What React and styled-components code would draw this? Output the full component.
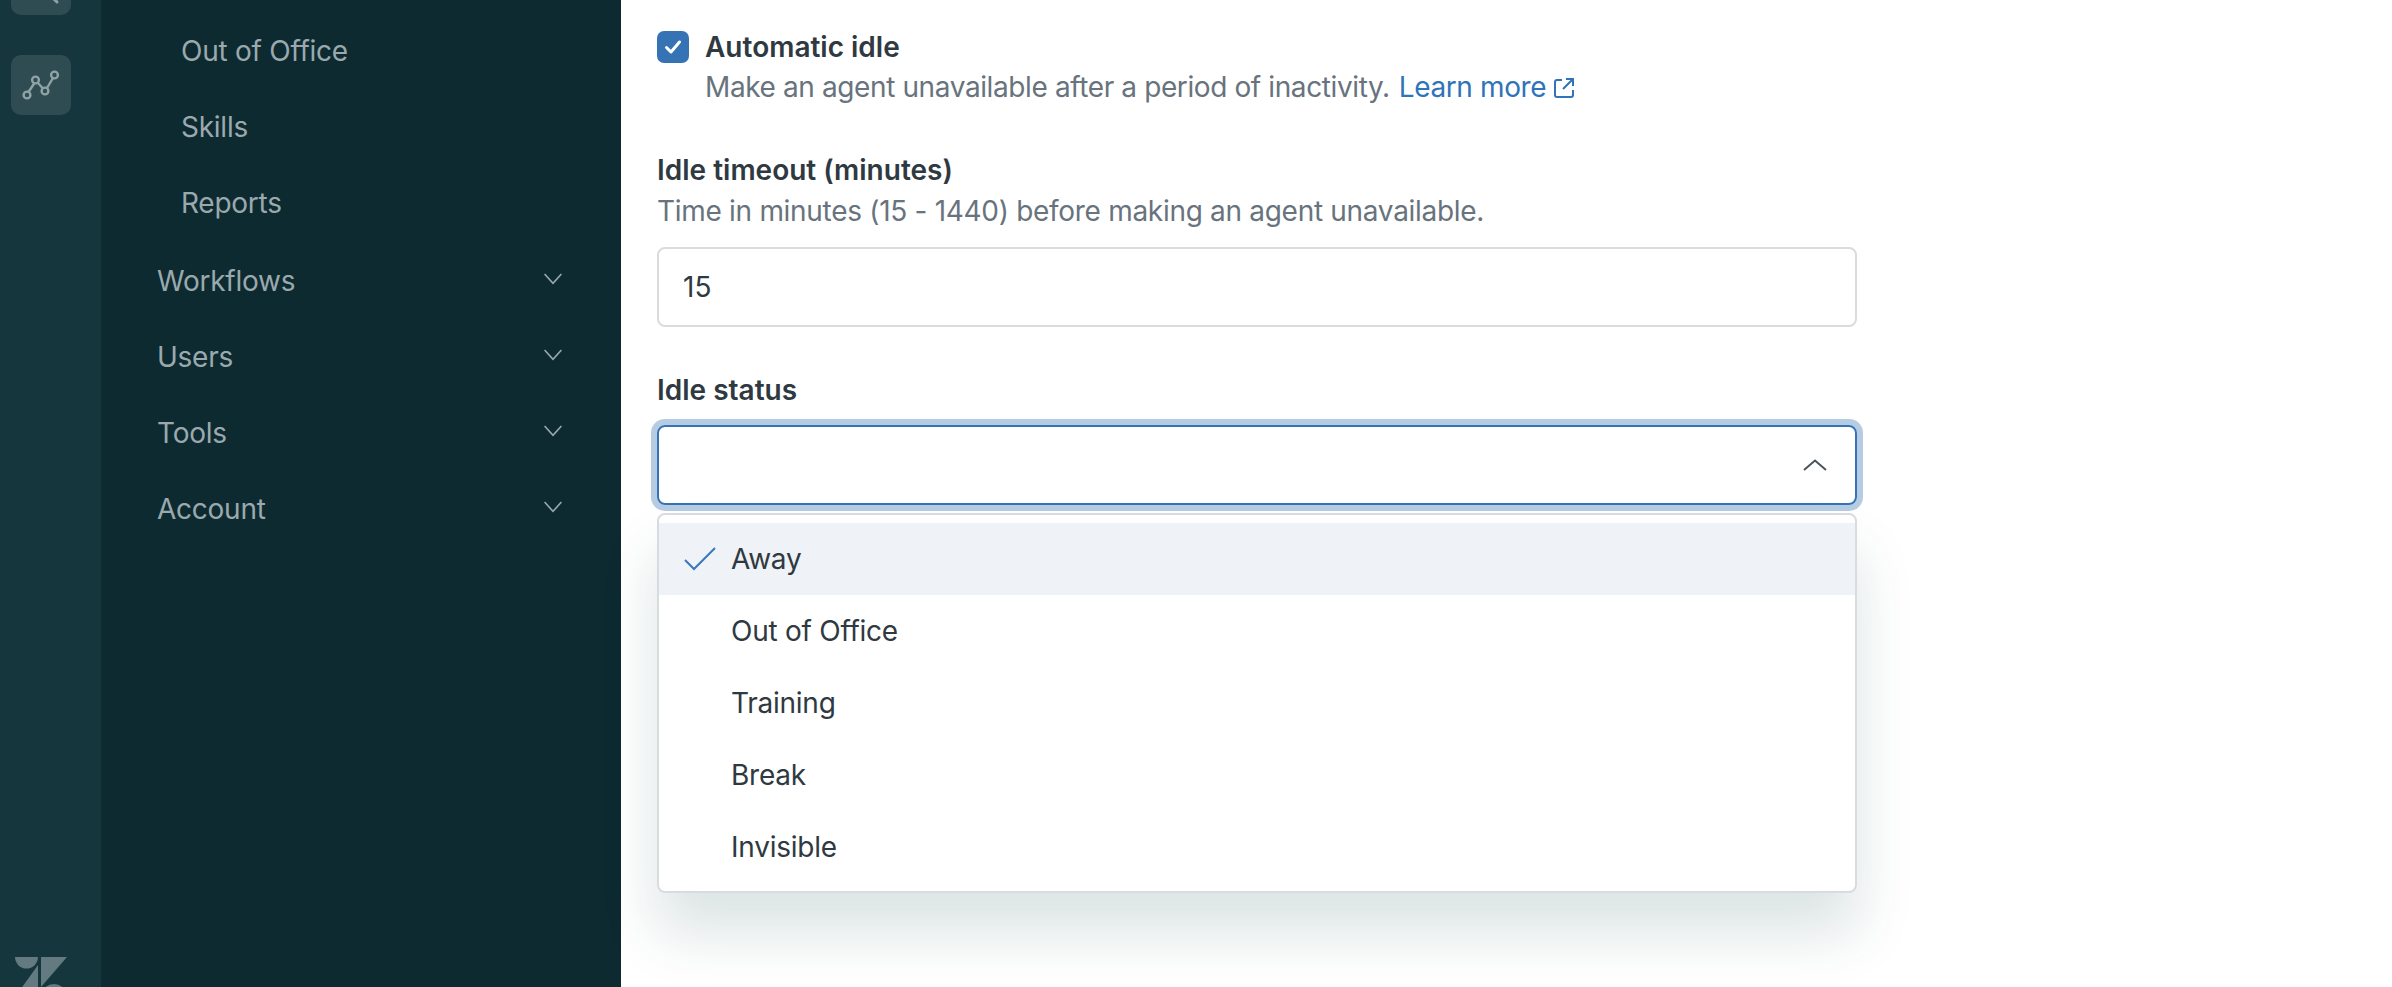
import styled, { createGlobalStyle } from "styled-components";

const GlobalStyle = createGlobalStyle`
  html, body {
    margin: 0;
    height: 100%;
    overflow: hidden;
    background: #fff;
    font-family: Inter, "Noto Sans", sans-serif;
  }
`;

const Layout = styled.div`
  display: flex;
  width: 2392px;
  height: 987px;
  overflow: hidden;
`;

const Rail = styled.aside`
  display: flex;
  flex-direction: column;
  gap: 40px;
  flex: none;
  box-sizing: border-box;
  width: 101px;
  height: 987px;
  padding-left: 11px;
  background: #16363e;
  overflow: hidden;
`;

const RailButton = styled.div`
  flex: none;
  width: 60px;
  height: 60px;
  border-radius: 10px;
  background: #304c53;
  color: #8fa3a6;
  &:first-child {
    margin-top: -45px;
  }
  svg {
    display: block;
  }
`;

const Logo = styled.svg`
  flex: none;
  display: block;
  width: 52px;
  height: 40px;
  margin: auto 0 -10px 4px;
  fill: #627a80;
`;

const Nav = styled.nav`
  flex: none;
  width: 520px;
  height: 987px;
  padding-top: 13px;
  box-sizing: border-box;
  background: #0e2a31;
  color: #9aa9ad;
  font-size: 28px;
  letter-spacing: -0.25px;
`;

const SubList = styled.div`
  margin-bottom: 2px;
`;

const SubItem = styled.div`
  height: 76px;
  padding-left: 80px;
  line-height: 76px;
`;

const NavItem = styled.div`
  display: flex;
  align-items: center;
  justify-content: space-between;
  height: 76px;
  padding: 0 59px 0 56px;
  line-height: 76px;
  svg {
    display: block;
    margin-top: -5px;
  }
`;

const Main = styled.main`
  flex: none;
  width: 1200px;
  padding: 27px 0 0 36px;
`;

const CheckRow = styled.div`
  display: flex;
  gap: 16px;
`;

const CheckBox = styled.span`
  display: flex;
  align-items: center;
  justify-content: center;
  flex: none;
  width: 32px;
  height: 32px;
  margin-top: 4px;
  border-radius: 7px;
  background: #3573b5;
`;

const Label = styled.div`
  font-size: 28px;
  font-weight: 600;
  line-height: 40px;
  color: #2f3941;
`;

const Hint = styled.div`
  display: flex;
  align-items: center;
  margin-top: ${(p) => p.$top || 0}px;
  font-size: 28px;
  line-height: 41px;
  letter-spacing: ${(p) => p.$spacing}px;
  color: #68737d;
`;

const LearnMore = styled.span`
  display: inline-flex;
  align-items: center;
  gap: 8px;
  margin-left: 9px;
  color: #2f74b8;
`;

const Field = styled.div`
  margin-top: ${(p) => p.$top}px;
`;

const TextBox = styled.div`
  box-sizing: border-box;
  width: 1200px;
  height: 80px;
  margin-top: 15px;
  padding: 0 24px;
  border: 2px solid #d8dcde;
  border-radius: 8px;
  font-size: 28px;
  line-height: 76px;
  color: #2f3941;
`;

const SelectWrap = styled.div`
  position: relative;
  width: 1200px;
  margin-top: 15px;
`;

const SelectBox = styled.div`
  display: flex;
  align-items: center;
  justify-content: flex-end;
  box-sizing: border-box;
  height: 80px;
  padding-right: 28px;
  border: 2px solid #3573b5;
  border-radius: 8px;
  box-shadow: 0 0 0 6px #b6cce2;
`;

const Menu = styled.div`
  position: absolute;
  top: 88px;
  left: 0;
  box-sizing: border-box;
  width: 1200px;
  padding: 8px 0;
  background: #fff;
  border: 2px solid #d8dcde;
  border-radius: 8px;
  box-shadow: 0 40px 56px rgba(23, 73, 77, 0.15);
`;

const Option = styled.div`
  display: flex;
  align-items: center;
  height: 72px;
  padding-left: 72px;
  position: relative;
  font-size: 28px;
  letter-spacing: -0.25px;
  color: #2f3941;
  background: ${(p) => (p.$selected ? "#eff2f6" : "transparent")};
  svg {
    position: absolute;
    left: 25px;
    top: 24px;
  }
`;

const subItems = ["Out of Office", "Skills", "Reports"];
const navItems = ["Workflows", "Users", "Tools", "Account"];
const statuses = ["Away", "Out of Office", "Training", "Break", "Invisible"];

function Chevron() {
  return (
    <svg width="18" height="12" viewBox="0 0 18 12" fill="none" stroke="currentColor" strokeWidth="1.6">
      <path d="M0.6 1 L9 10.4 L17.4 1" />
    </svg>
  );
}

export default function App() {
  return (
    <Layout>
      <GlobalStyle />
      <Rail>
        <RailButton>
          <svg width="60" height="60" viewBox="0 0 60 60" fill="none" stroke="currentColor" strokeWidth="3" strokeLinecap="round">
            <circle cx="29" cy="30" r="11" />
            <path d="M37 38 L46 47" />
          </svg>
        </RailButton>
        <RailButton>
          <svg width="60" height="60" viewBox="0 0 60 60" fill="none" stroke="currentColor" strokeWidth="2.4">
            <path d="M17.5 37 L23.5 28 M27 28 L31.5 33 M36 33 L42 23" />
            <circle cx="16" cy="40" r="3.4" />
            <circle cx="24.5" cy="25" r="3.4" />
            <circle cx="34" cy="36" r="3.4" />
            <circle cx="43.5" cy="20" r="3.4" />
          </svg>
        </RailButton>
        <Logo viewBox="0 0 52 40">
          <path d="M0 0 H23 A11.5 11.5 0 0 1 0 0 Z" />
          <path d="M23 8 V40 H0 Z" />
          <path d="M26 0 H52 L26 30 Z" />
          <path d="M26 40 A13 13 0 0 1 52 40 Z" />
        </Logo>
      </Rail>

      <Nav>
        <SubList>
          {subItems.map((item) => (
            <SubItem key={item}>{item}</SubItem>
          ))}
        </SubList>
        {navItems.map((item) => (
          <NavItem key={item}>
            {item}
            <Chevron />
          </NavItem>
        ))}
      </Nav>

      <Main>
        <CheckRow>
          <CheckBox>
            <svg width="18" height="18" viewBox="0 0 18 18" fill="none" stroke="#fff" strokeWidth="3" strokeLinecap="round" strokeLinejoin="round">
              <path d="M2.5 9.5 L7 14 L15.5 4" />
            </svg>
          </CheckBox>
          <div>
            <Label>Automatic idle</Label>
            <Hint $spacing={-0.39}>
              Make an agent unavailable after a period of inactivity.
              <LearnMore>
                Learn more
                <svg width="20" height="20" viewBox="0 0 20 20" fill="none" stroke="currentColor" strokeWidth="2">
                  <path d="M8 2 H3 a2 2 0 0 0 -2 2 V17 a2 2 0 0 0 2 2 H17 a2 2 0 0 0 2 -2 V12" />
                  <path d="M12 1 H19 V8 M19 1 L9 11" />
                </svg>
              </LearnMore>
            </Hint>
          </div>
        </CheckRow>

        <Field $top={42}>
          <Label>Idle timeout (minutes)</Label>
          <Hint $top={1} $spacing={-0.3}>
            Time in minutes (15 - 1440) before making an agent unavailable.
          </Hint>
          <TextBox>15</TextBox>
        </Field>

        <Field $top={43}>
          <Label>Idle status</Label>
          <SelectWrap>
            <SelectBox>
              <svg width="24" height="12" viewBox="0 0 24 12" fill="none" stroke="#49545c" strokeWidth="2">
                <path d="M1 11 L12 1.5 L23 11" />
              </svg>
            </SelectBox>
            <Menu>
              {statuses.map((status, i) => (
                <Option key={status} $selected={i === 0}>
                  {i === 0 && (
                    <svg width="32" height="24" viewBox="0 0 32 24" fill="none" stroke="#3a79bb" strokeWidth="2">
                      <path d="M1 13 L10 22 L31 1" />
                    </svg>
                  )}
                  {status}
                </Option>
              ))}
            </Menu>
          </SelectWrap>
        </Field>
      </Main>
    </Layout>
  );
}
